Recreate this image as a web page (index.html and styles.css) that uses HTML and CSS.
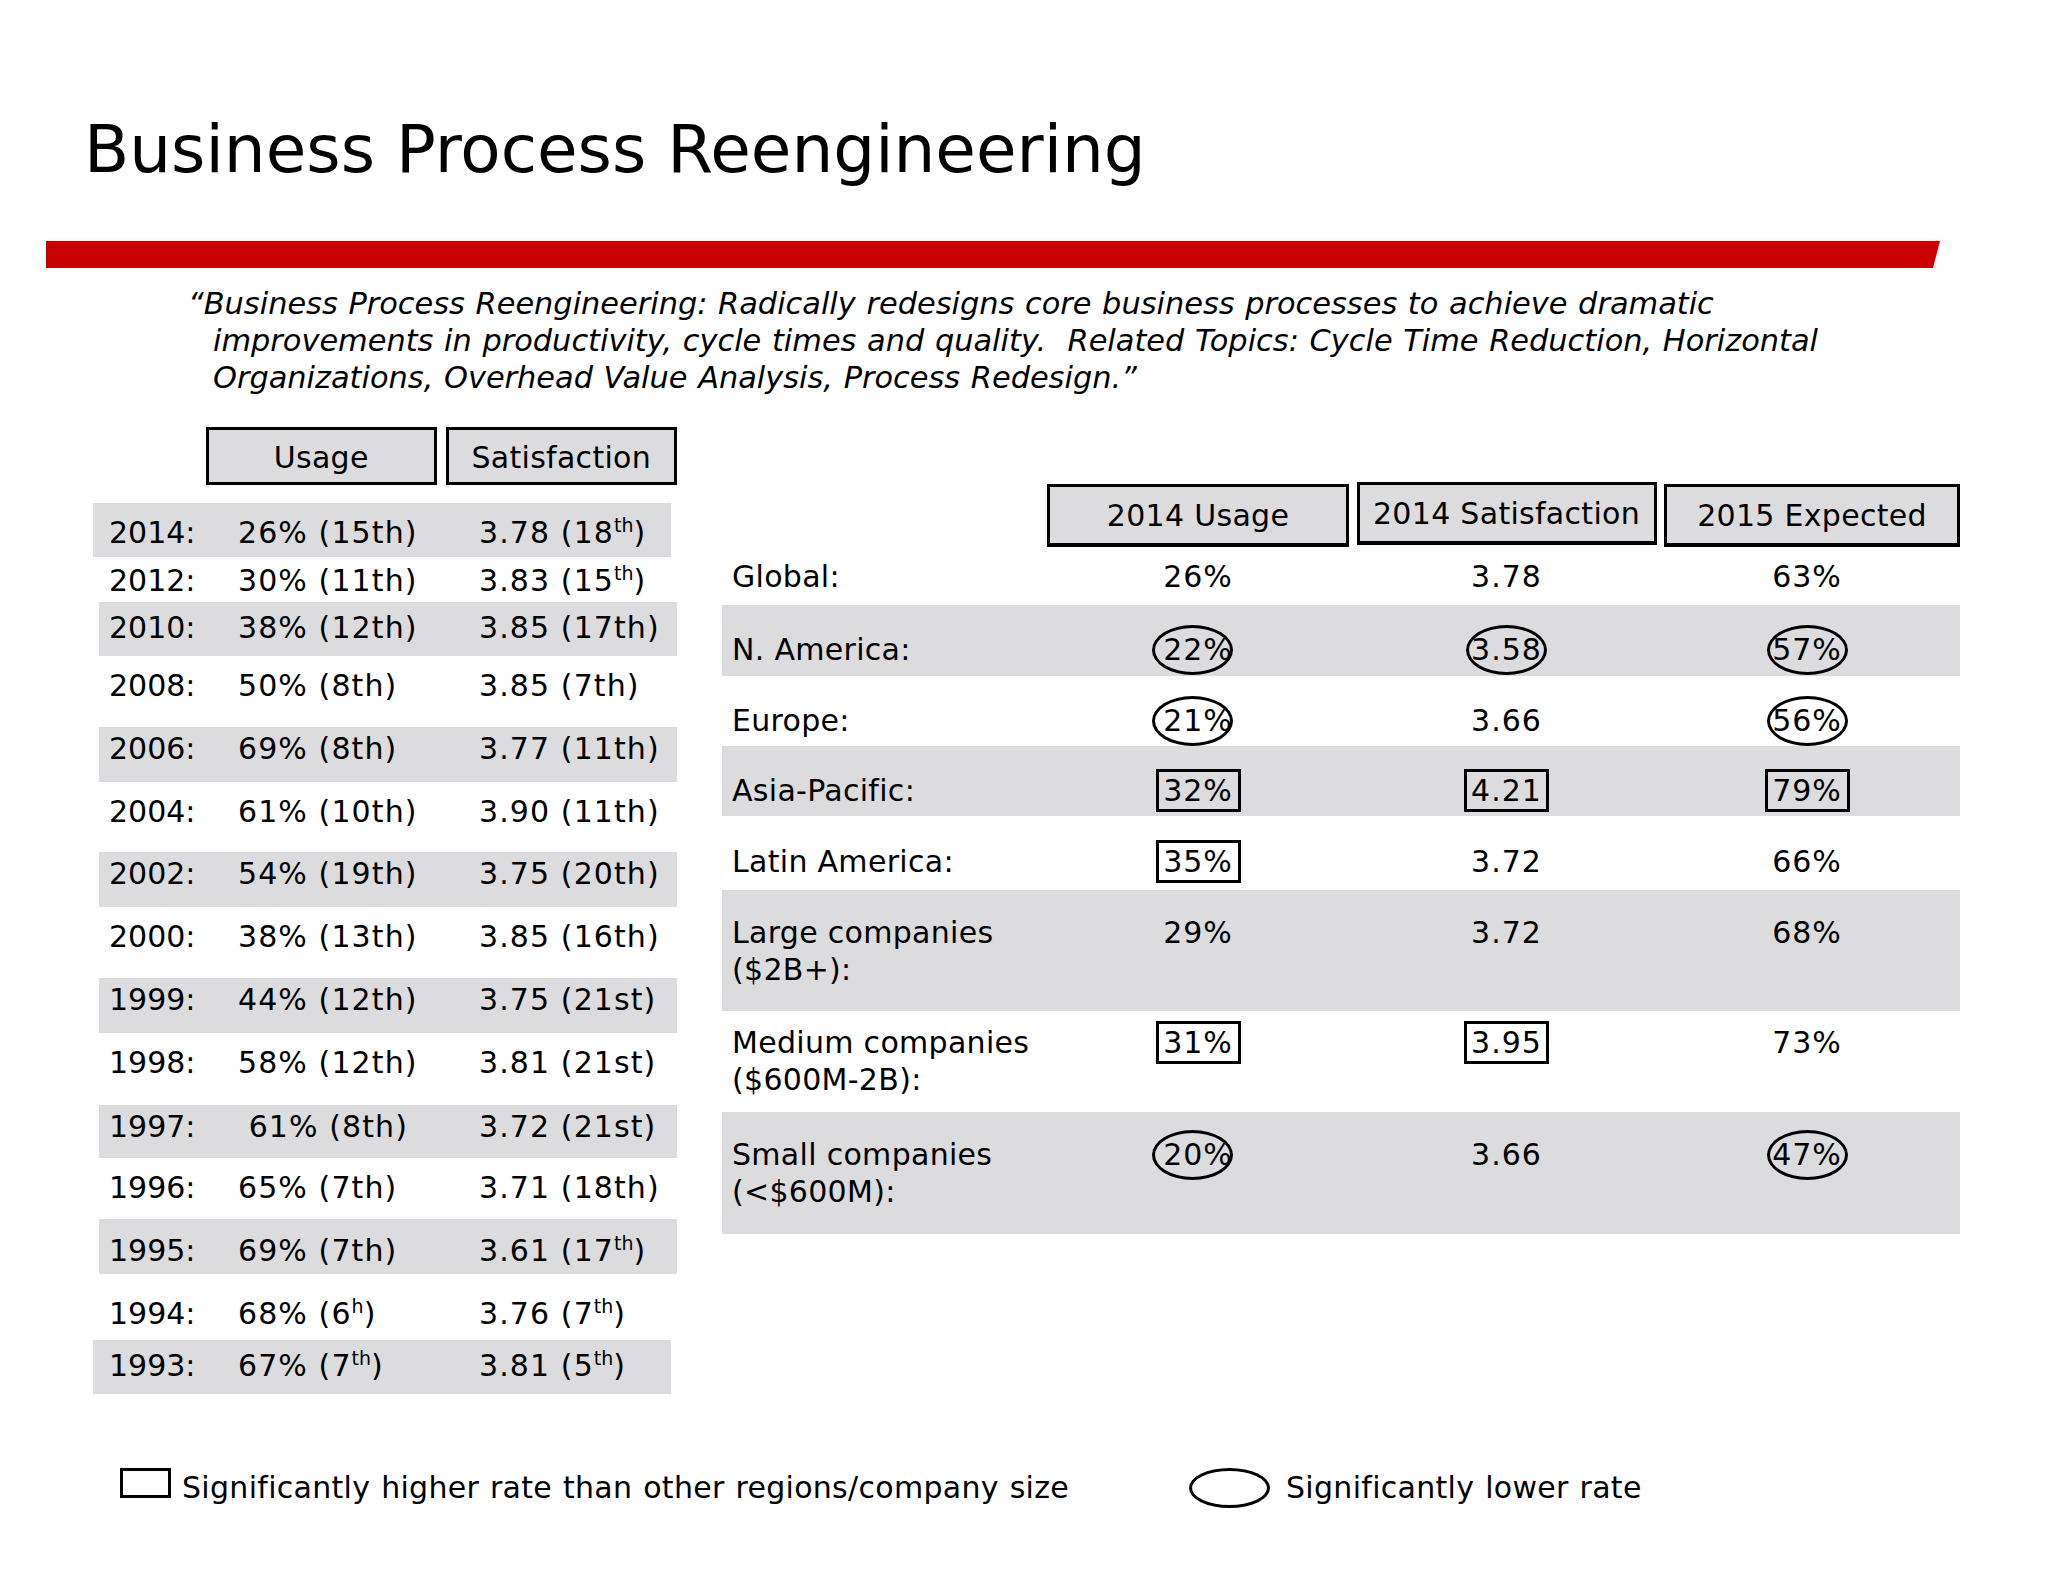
FILE: index.html
```html
<!DOCTYPE html>
<html>
<head>
<meta charset="utf-8">
<link rel="stylesheet" href="styles.css">
</head>
<body>
<div class="slide">
  <h1 class="title">Business Process Reengineering</h1>
  <div class="bar"></div>
  <p class="quote">“Business Process Reengineering: Radically redesigns core business processes to achieve dramatic<br>improvements in productivity, cycle times and quality.&nbsp; Related Topics: Cycle Time Reduction, Horizontal<br>Organizations, Overhead Value Analysis, Process Redesign.”</p>

  <div class="main">
    <div class="left">
      <div class="lhead">
        <div class="hbox hb-u">Usage</div>
        <div class="hbox hb-s">Satisfaction</div>
      </div>
      <div class="lrow gray shift r2014"><span class="yr">2014:</span><span class="us">26% (15th)</span><span class="sa">3.78 (18<sup>th</sup>)</span></div>
      <div class="lrow r2012"><span class="yr">2012:</span><span class="us">30% (11th)</span><span class="sa">3.83 (15<sup>th</sup>)</span></div>
      <div class="lrow gray r2010"><span class="yr">2010:</span><span class="us">38% (12th)</span><span class="sa">3.85 (17th)</span></div>
      <div class="lrow white"><span class="yr">2008:</span><span class="us">50% (8th)</span><span class="sa">3.85 (7th)</span></div>
      <div class="lrow gray"><span class="yr">2006:</span><span class="us">69% (8th)</span><span class="sa">3.77 (11th)</span></div>
      <div class="lrow white r70"><span class="yr">2004:</span><span class="us">61% (10th)</span><span class="sa">3.90 (11th)</span></div>
      <div class="lrow gray"><span class="yr">2002:</span><span class="us">54% (19th)</span><span class="sa">3.75 (20th)</span></div>
      <div class="lrow white"><span class="yr">2000:</span><span class="us">38% (13th)</span><span class="sa">3.85 (16th)</span></div>
      <div class="lrow gray"><span class="yr">1999:</span><span class="us">44% (12th)</span><span class="sa">3.75 (21st)</span></div>
      <div class="lrow white r72"><span class="yr">1998:</span><span class="us">58% (12th)</span><span class="sa">3.81 (21st)</span></div>
      <div class="lrow gray r1997"><span class="yr">1997:</span><span class="us">&nbsp;61% (8th)</span><span class="sa">3.72 (21st)</span></div>
      <div class="lrow white r1996"><span class="yr">1996:</span><span class="us">65% (7th)</span><span class="sa">3.71 (18th)</span></div>
      <div class="lrow gray r1995"><span class="yr">1995:</span><span class="us">69% (7th)</span><span class="sa">3.61 (17<sup>th</sup>)</span></div>
      <div class="lrow white r1994"><span class="yr">1994:</span><span class="us">68% (6<sup>h</sup>)</span><span class="sa">3.76 (7<sup>th</sup>)</span></div>
      <div class="lrow gray shift r1993"><span class="yr">1993:</span><span class="us">67% (7<sup>th</sup>)</span><span class="sa">3.81 (5<sup>th</sup>)</span></div>
    </div>

    <div class="right">
      <div class="rgrid rhead">
        <div></div>
        <div class="hbox rh">2014 Usage</div>
        <div class="hbox rh rh-mid">2014 Satisfaction</div>
        <div class="hbox rh">2015 Expected</div>
      </div>
      <div class="rgrid rrow rr-global">
        <div class="lbl">Global:</div>
        <div class="val c1">26%</div>
        <div class="val c2">3.78</div>
        <div class="val c3">63%</div>
      </div>
      <div class="rgrid rrow gray rr-na">
        <div class="lbl">N. America:</div>
        <div class="val c1"><span class="ring">22%</span></div>
        <div class="val c2"><span class="ring">3.58</span></div>
        <div class="val c3"><span class="ring">57%</span></div>
      </div>
      <div class="rgrid rrow rr-eu">
        <div class="lbl">Europe:</div>
        <div class="val c1"><span class="ring">21%</span></div>
        <div class="val c2">3.66</div>
        <div class="val c3"><span class="ring">56%</span></div>
      </div>
      <div class="rgrid rrow gray rr-ap">
        <div class="lbl">Asia-Pacific:</div>
        <div class="val c1"><span class="box">32%</span></div>
        <div class="val c2"><span class="box">4.21</span></div>
        <div class="val c3"><span class="box">79%</span></div>
      </div>
      <div class="rgrid rrow rr-la">
        <div class="lbl">Latin America:</div>
        <div class="val c1"><span class="box">35%</span></div>
        <div class="val c2">3.72</div>
        <div class="val c3">66%</div>
      </div>
      <div class="rgrid rrow gray rr-large">
        <div class="lbl">Large companies<br>($2B+):</div>
        <div class="val c1">29%</div>
        <div class="val c2">3.72</div>
        <div class="val c3">68%</div>
      </div>
      <div class="rgrid rrow rr-med">
        <div class="lbl">Medium companies<br>($600M-2B):</div>
        <div class="val c1"><span class="box">31%</span></div>
        <div class="val c2"><span class="box">3.95</span></div>
        <div class="val c3">73%</div>
      </div>
      <div class="rgrid rrow gray rr-small">
        <div class="lbl">Small companies<br>(&lt;$600M):</div>
        <div class="val c1"><span class="ring">20%</span></div>
        <div class="val c2">3.66</div>
        <div class="val c3"><span class="ring">47%</span></div>
      </div>
    </div>
  </div>

  <div class="legend">
    <div class="lg-item lg-first"><span class="lg-sq"></span><span>Significantly higher rate than other regions/company size</span></div>
    <div class="lg-item"><span class="lg-ov"></span><span>Significantly lower rate</span></div>
  </div>
</div>
</body>
</html>
```

FILE: styles.css
```css
body {
  margin: 0;
  background: #fff;
}

.slide {
  width: 2048px;
  height: 1582px;
  overflow: hidden;
  font-family: "DejaVu Sans", Verdana, sans-serif;
  color: #000;
  background: #fff;
}

.title {
  margin: 0;
  padding: 111px 0 0 84px;
  font-size: 66px;
  font-weight: normal;
  line-height: 77px;
}

.bar {
  margin: 53px 0 0 46px;
  width: 1894px;
  height: 27px;
  background: #c80000;
  clip-path: polygon(0 0, 100% 0, calc(100% - 7px) 100%, 0 100%);
}

.quote {
  margin: 17px 0 0;
  padding-left: 213px;
  text-indent: -25px;
  font-style: italic;
  font-size: 30.4px;
  line-height: 37px;
  word-spacing: 1px;
  white-space: nowrap;
}

.main {
  display: flex;
  margin-top: 31px;
}

/* left table */
.left {
  margin-left: 93px;
  width: 584px;
  flex: none;
}

.lhead {
  display: flex;
  gap: 9px;
  margin-left: 113px;
  margin-bottom: 18px;
}

.hbox {
  box-sizing: border-box;
  border: 3px solid #000;
  background: #dcdcde;
  font-size: 30px;
  letter-spacing: 0.3px;
  display: flex;
  align-items: center;
  justify-content: center;
  white-space: nowrap;
}

.hb-u { width: 231px; height: 58px; padding-top: 3px; }
.hb-s { width: 232px; height: 58px; padding-top: 3px; }

.lrow {
  box-sizing: border-box;
  display: flex;
  height: 55px;
  width: 578px;
  margin-left: 6px;
  padding-left: 10px;
  font-size: 30px;
  line-height: 44px;
  white-space: nowrap;
}

.lrow.gray { background: #dcdcde; }
.lrow.white { height: 71px; padding-top: 8px; }
.lrow.shift { margin-left: 0; padding-left: 16px; }

.r2014 { height: 54px; padding-top: 8px; }
.r2012 { height: 45px; padding-top: 2px; }
.r2010 { height: 54px; padding-top: 4px; }
.lrow.r70 { height: 70px; }
.lrow.r72 { height: 72px; }
.r1997 { height: 53px; }
.lrow.r1996 { height: 61px; }
.r1995 { padding-top: 10px; }
.lrow.r1994 { height: 66px; padding-top: 18px; }
.r1993 { height: 54px; padding-top: 4px; }

.yr { width: 129px; flex: none; }
.us { width: 241px; flex: none; letter-spacing: 1.1px; }
.sa { letter-spacing: 1.1px; }

sup {
  font-size: 19px;
  line-height: 0;
  vertical-align: 11px;
  letter-spacing: 0;
}

/* right table */
.right {
  margin-left: 45px;
  width: 1238px;
  flex: none;
  padding-top: 57px;
}

.rgrid {
  display: grid;
  grid-template-columns: 317.5px 302px 300px 296px;
  column-gap: 7.5px;
}

.rhead { height: 63px; }

.rh {
  height: 63px;
  border-bottom-width: 4px;
}

.rh-mid {
  margin-top: -2px;
}

.rrow {
  box-sizing: border-box;
  height: 70px;
  padding-top: 26px;
  font-size: 30px;
  line-height: 37px;
  white-space: nowrap;
}

.rrow.gray { background: #dcdcde; }

.rr-global { height: 58px; padding-top: 11px; }
.rr-na { height: 71px; }
.rr-la { height: 74px; padding-top: 27px; }
.rr-large { height: 121px; padding-top: 24px; }
.rr-med { height: 101px; padding-top: 13px; }
.rr-small { height: 122px; padding-top: 24px; }

.lbl {
  padding-left: 10px;
  letter-spacing: 0.3px;
}

.val {
  height: 37px;
  display: flex;
  justify-content: center;
  align-items: center;
  letter-spacing: 1px;
}

.c3 { padding-right: 10px; }

.ring {
  box-sizing: border-box;
  flex: none;
  width: 81px;
  height: 50px;
  border: 3px solid #000;
  border-radius: 50%;
  display: flex;
  align-items: center;
  justify-content: center;
}

.c1 .ring {
  margin-left: -12px;
  padding-left: 12px;
}

.box {
  box-sizing: border-box;
  flex: none;
  width: 85px;
  height: 43px;
  border: 3px solid #000;
  display: flex;
  align-items: center;
  justify-content: center;
}

/* legend */
.legend {
  display: flex;
  margin-top: 74px;
  font-size: 30px;
  line-height: 40px;
  letter-spacing: 0.3px;
  word-spacing: 1px;
  white-space: nowrap;
}

.lg-item {
  display: flex;
  align-items: center;
}

.lg-first {
  width: 1189px;
  padding-left: 120px;
  box-sizing: border-box;
}

.lg-sq {
  align-self: flex-start;
  box-sizing: border-box;
  width: 51px;
  height: 30px;
  border: 3px solid #000;
  margin-right: 11px;
}

.lg-ov {
  box-sizing: border-box;
  width: 81px;
  height: 40px;
  border: 3px solid #000;
  border-radius: 50%;
  margin-right: 16px;
}
```
